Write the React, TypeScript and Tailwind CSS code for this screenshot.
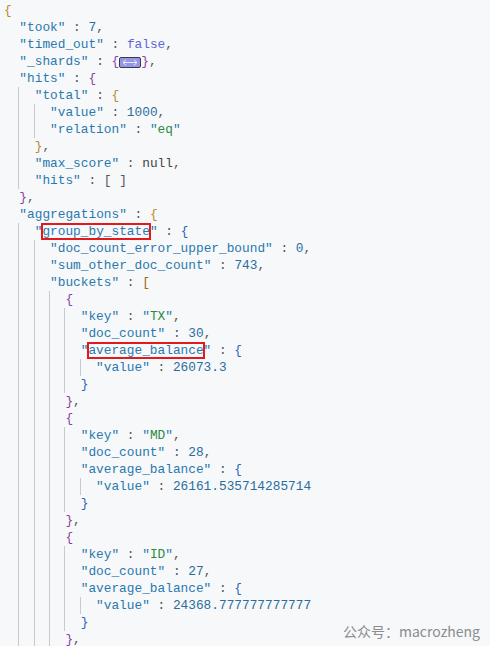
import type { ReactNode } from "react";

// bracket colours (pair colourisation, approximated)
const GOLD = "text-[#c0862a]";
const PURPLE = "text-[#8a3fa6]";
const BLUE = "text-[#2f62b8]";
const BROWN = "text-[#9a6a1e]";

const Key = ({ k, boxed }: { k: string; boxed?: boolean }) => (
  <>
    <span className="text-[#2a78ad]">
      "
      {boxed ? (
        <span className="outline-2 outline-solid outline-[#e3191c] outline-offset-[-1px]">
          {k}
        </span>
      ) : (
        k
      )}
      "
    </span>
    <span className="text-[#555]"> : </span>
  </>
);

const Num = ({ v }: { v: string }) => <span className="text-[#2a6d9c]">{v}</span>;
const Str = ({ v }: { v: string }) => (
  <span className="text-[#2a78ad]">
    "<span className="text-[#2b8a3e]">{v}</span>"
  </span>
);
const Comma = () => <span className="text-[#555]">,</span>;

const Line = ({ children }: { children: ReactNode }) => (
  <div className="h-[17px] whitespace-pre">{children}</div>
);

type BlockProps = {
  head?: ReactNode;
  open: string;
  close: string;
  color: string;
  comma?: boolean;
  guide?: boolean;
  children: ReactNode;
};

const Block = ({ head, open, close, color, comma, guide = true, children }: BlockProps) => (
  <div>
    <Line>
      {head}
      <span className={color}>{open}</span>
    </Line>
    <div className={guide ? "-ml-px border-l border-[#c7cad0] pl-[2ch]" : "pl-[2ch]"}>
      {children}
    </div>
    <Line>
      <span className={color}>{close}</span>
      {comma && <Comma />}
    </Line>
  </div>
);

const buckets = [
  { key: "TX", count: "30", value: "26073.3", boxed: true },
  { key: "MD", count: "28", value: "26161.535714285714" },
  { key: "ID", count: "27", value: "24368.777777777777" },
];

export default function App() {
  return (
    <div className="relative h-[646px] w-[490px] overflow-hidden bg-[#f6f8fa]">
      <div className="pl-[4px] pt-[2px] font-['Liberation_Mono',monospace] text-[12.8px] leading-[17px] text-[#555]">
        <Block open="{" close="}" color={GOLD} guide={false}>
          <Line>
            <Key k="took" />
            <Num v="7" />
            <Comma />
          </Line>
          <Line>
            <Key k="timed_out" />
            <span className="text-[#6464d8]">false</span>
            <Comma />
          </Line>
          <Line>
            <Key k="_shards" />
            <span className={PURPLE}>{"{"}</span>
            <span className="inline-flex h-[11px] w-[22px] items-center justify-center rounded-[2px] border border-[#3a3a4a] bg-[#9597e4] align-[-1px]">
              <svg width="16" height="7" viewBox="0 0 16 7" fill="none" stroke="#e8e8ff" strokeWidth="1">
                <path d="M1 3.5h14M4 0.8L1 3.5l3 2.7M12 0.8l3 2.7-3 2.7" />
              </svg>
            </span>
            <span className={PURPLE}>{"}"}</span>
            <Comma />
          </Line>
          <Block head={<Key k="hits" />} open="{" close="}" color={PURPLE} comma>
            <Block head={<Key k="total" />} open="{" close="}" color={GOLD} comma>
              <Line>
                <Key k="value" />
                <Num v="1000" />
                <Comma />
              </Line>
              <Line>
                <Key k="relation" />
                <Str v="eq" />
              </Line>
            </Block>
            <Line>
              <Key k="max_score" />
              <span className="text-[#444]">null</span>
              <Comma />
            </Line>
            <Line>
              <Key k="hits" />
              <span className="text-[#555]">[ ]</span>
            </Line>
          </Block>
          <Block head={<Key k="aggregations" />} open="{" close="}" color={GOLD}>
            <Block head={<Key k="group_by_state" boxed />} open="{" close="}" color={BLUE}>
              <Line>
                <Key k="doc_count_error_upper_bound" />
                <Num v="0" />
                <Comma />
              </Line>
              <Line>
                <Key k="sum_other_doc_count" />
                <Num v="743" />
                <Comma />
              </Line>
              <Block head={<Key k="buckets" />} open="[" close="]" color={BROWN}>
                {buckets.map((b) => (
                  <Block key={b.key} open="{" close="}" color={PURPLE} comma>
                    <Line>
                      <Key k="key" />
                      <Str v={b.key} />
                      <Comma />
                    </Line>
                    <Line>
                      <Key k="doc_count" />
                      <Num v={b.count} />
                      <Comma />
                    </Line>
                    <Block
                      head={<Key k="average_balance" boxed={b.boxed} />}
                      open="{"
                      close="}"
                      color={BLUE}
                    >
                      <Line>
                        <Key k="value" />
                        <Num v={b.value} />
                      </Line>
                    </Block>
                  </Block>
                ))}
              </Block>
            </Block>
          </Block>
        </Block>
      </div>

      {/* watermark */}
      <div className="absolute bottom-[6px] right-[10px] font-['Noto_Sans_CJK_SC',sans-serif] text-[14px] leading-[18px] text-[#8c8c8c]">
        公众号：macrozheng
      </div>
    </div>
  );
}
